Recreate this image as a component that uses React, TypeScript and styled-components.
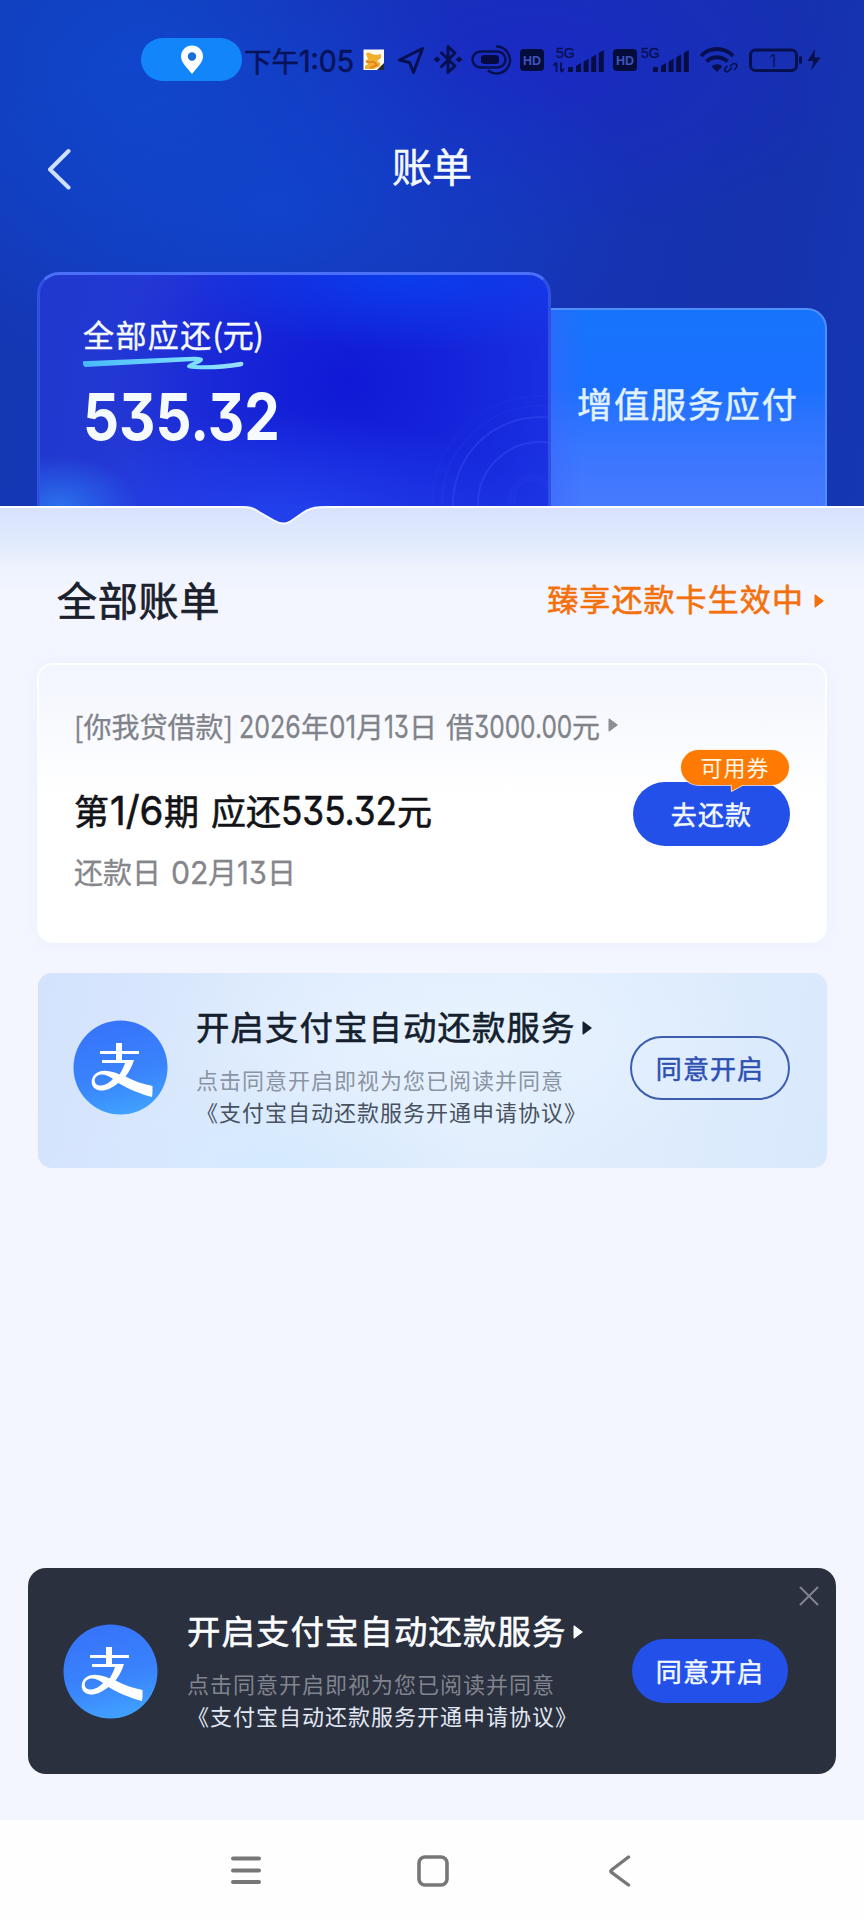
import React, { useLayoutEffect, useRef, useState } from 'react';
import styled, { createGlobalStyle } from 'styled-components';

const GlobalStyle = createGlobalStyle`
  * { box-sizing: border-box; }
  body {
    margin: 0;
    background: #f3f6ff;
    font-family: 'Noto Sans CJK SC', 'Noto Sans', sans-serif;
  }
  button { font-family: inherit; padding: 0; cursor: pointer; }
`;

const Screen = styled.div`
  width: 864px;
  height: 1920px;
  display: flex;
  flex-direction: column;
  background: #f3f6ff;
  overflow: hidden;
`;

/* ---------- numerals ---------- */

const NumBox = styled.span<{ $w: number; $size: number; $weight: number; $ml?: number }>`
  display: inline-block;
  flex: none;
  width: ${(p) => p.$w}px;
  margin-left: ${(p) => p.$ml ?? 0}px;
  font-family: Inter, sans-serif;
  font-feature-settings: 'cv09' 1;
  font-size: ${(p) => p.$size}px;
  font-weight: ${(p) => p.$weight};
  line-height: 1;
  letter-spacing: 0;
  white-space: nowrap;
`;

const NumInner = styled.span`
  display: inline-block;
  transform-origin: 0 50%;
`;

/* Condensed numerals: the digits are squeezed to the given advance width. */
function Num(props: { w: number; size: number; weight?: number; ml?: number; children: string }) {
  const ref = useRef<HTMLSpanElement>(null);
  const [scale, setScale] = useState(1);
  useLayoutEffect(() => {
    if (ref.current) setScale(props.w / ref.current.offsetWidth);
  }, [props.w, props.children]);
  return (
    <NumBox $w={props.w} $size={props.size} $weight={props.weight ?? 400} $ml={props.ml}>
      <NumInner ref={ref} style={{ transform: `scaleX(${scale})` }}>
        {props.children}
      </NumInner>
    </NumBox>
  );
}

/* ---------- header ---------- */

const Header = styled.header`
  flex: none;
  height: 506px;
  display: flex;
  flex-direction: column;
  background:
    radial-gradient(ellipse 330px 260px at 130px 60px, rgba(14, 76, 212, 0.7), rgba(14, 76, 212, 0) 100%),
    radial-gradient(ellipse 360px 200px at 280px 210px, rgba(16, 70, 210, 0.7), rgba(16, 70, 210, 0) 100%),
    radial-gradient(ellipse 360px 180px at 530px 60px, rgba(27, 38, 200, 0.7), rgba(27, 38, 200, 0) 100%),
    linear-gradient(100deg, #1438b4 0%, #1634b6 55%, #1632ac 85%, #1537b4 100%);
`;

const StatusBar = styled.div`
  height: 98px;
  padding: 21px 0 0 141px;
  display: flex;
  align-items: center;
  color: #07125a;
`;

const LocationPill = styled.div`
  width: 101px;
  height: 43px;
  border-radius: 22px;
  background: #1285fb;
  display: flex;
  align-items: center;
  justify-content: center;
`;

const Clock = styled.div`
  width: 113px;
  padding-left: 2px;
  display: flex;
  align-items: baseline;
  font-size: 27.5px;
  line-height: 40px;
  -webkit-text-stroke: 0.6px #07125a;
`;

const StatusIcon = styled.svg<{ $gap: number }>`
  flex: none;
  margin-left: ${(p) => p.$gap}px;
  display: block;
`;

const NavBar = styled.div`
  height: 143px;
  display: grid;
  grid-template-columns: 120px 1fr 120px;
  align-items: center;
`;

const BackButton = styled.button`
  border: 0;
  background: none;
  padding: 0 0 2px 46px;
  display: flex;
`;

const PageTitle = styled.h1`
  margin: 0 0 9px;
  text-align: center;
  font-size: 40px;
  font-weight: 400;
  line-height: 56px;
  color: #f4f8ff;
  -webkit-text-stroke: 0.5px #f4f8ff;
`;

const Tabs = styled.div`
  flex: 1;
  padding: 31px 37px 0;
  display: flex;
  align-items: flex-end;
`;

const ActiveTab = styled.div`
  width: 514px;
  height: 234px;
  position: relative;
  border-radius: 22px 22px 0 0;
  border: 3px solid #3050e4;
  border-top-color: #4a70fa;
  border-bottom: 0;
  padding: 37px 0 0 43px;
  background:
    radial-gradient(ellipse 80px 50px at 22px 234px, rgba(44, 122, 242, 0.85), rgba(44, 110, 242, 0) 100%),
    radial-gradient(ellipse 230px 80px at 370px 0, rgba(8, 66, 240, 0.85), rgba(8, 66, 240, 0) 100%),
    radial-gradient(ellipse 240px 110px at 250px 250px, rgba(36, 68, 240, 0.9), rgba(36, 68, 240, 0) 100%),
    radial-gradient(ellipse 240px 200px at 310px 110px, rgba(16, 26, 214, 1), rgba(16, 26, 214, 0) 100%),
    linear-gradient(100deg, #2038cc 0%, #2438d6 25%, #1a2cdc 60%, #1b34e4 100%);
  background-origin: border-box;
  color: #f5faff;
`;

const Ripples = styled.svg`
  position: absolute;
  right: 0;
  bottom: 0;
`;

const TabLabel = styled.div`
  font-size: 31px;
  line-height: 44px;
  letter-spacing: 1.4px;
  white-space: nowrap;
  -webkit-text-stroke: 0.4px #f5faff;
`;

const Parens = styled.span`
  letter-spacing: -0.4px;
`;

const Squiggle = styled.svg`
  display: block;
  margin-top: 0;
`;

const Amount = styled.div`
  margin-top: 14px;
  padding-left: 0;
`;

const SideTab = styled.div`
  width: 276px;
  height: 198px;
  border-radius: 0 20px 0 0;
  border: 2px solid #5090fd;
  border-left: 0;
  border-bottom: 0;
  padding: 68px 0 0 26px;
  background:
    linear-gradient(90deg, rgba(60, 100, 250, 0.45), rgba(60, 100, 250, 0) 12%),
    linear-gradient(180deg, #1674fc 0%, #1b70fe 40%, #3876fe 70%, #477afe 100%);
  background-origin: border-box;
  font-size: 35.4px;
  line-height: 50px;
  letter-spacing: 1.5px;
  color: #e1f2ff;
  -webkit-text-stroke: 0.5px #e1f2ff;
  white-space: nowrap;
`;

/* ---------- bills ---------- */

const Bills = styled.main`
  position: relative;
  flex: 1;
  padding: 0 37px;
  border-top: 2px solid #fbfdff;
  background: linear-gradient(180deg, #d9e2fd 0, #e1ebfd 36px, #edf2fd 58px, #f3f6ff 85px);
`;

const Notch = styled.svg`
  position: absolute;
  left: 240px;
  top: -3px;
`;

const BillsHead = styled.div`
  height: 155px;
  padding: 35px 3px 0 20px;
  display: flex;
  align-items: center;
  justify-content: space-between;
`;

const SectionTitle = styled.h2`
  margin: -8px 0 0;
  font-size: 40px;
  line-height: 56px;
  font-weight: 400;
  letter-spacing: 0.8px;
  color: #1a202c;
  -webkit-text-stroke: 0.7px #1a202c;
`;

const CardStatus = styled.div`
  margin-top: -10px;
  display: flex;
  align-items: center;
  gap: 10px;
  font-size: 31px;
  line-height: 44px;
  letter-spacing: 1.1px;
  color: #f4700c;
  -webkit-text-stroke: 0.6px #f4700c;
  > svg { margin-top: 5px; }
`;

const BillCard = styled.section`
  height: 280px;
  padding: 40px 36px 0 35px;
  border: 2px solid #fdfeff;
  border-radius: 16px;
  background: linear-gradient(180deg, #f3f6ff 0, #f6f8fe 40px, #fff 130px);
  box-shadow: 0 0 14px rgba(220, 228, 246, 0.35);
`;

const Loan = styled.div`
  display: flex;
  align-items: baseline;
  font-size: 28px;
  line-height: 42px;
  color: #808389;
  -webkit-text-stroke: 0.3px #808389;
  white-space: nowrap;
  > svg { align-self: center; margin-top: -2px; }
`;

const Due = styled.div`
  display: flex;
  align-items: flex-start;
  justify-content: space-between;
`;

const Installment = styled.div`
  margin-top: 38px;
  display: flex;
  align-items: baseline;
  font-size: 35px;
  line-height: 50px;
  color: #121317;
  -webkit-text-stroke: 0.6px #121317;
  white-space: nowrap;
`;

const DueDate = styled.div`
  margin-top: 15px;
  display: flex;
  align-items: baseline;
  font-size: 29px;
  line-height: 42px;
  color: #85868a;
  -webkit-text-stroke: 0.3px #85868a;
  white-space: nowrap;
`;

const Gap = styled.span<{ $w: number }>`
  flex: none;
  width: ${(p) => p.$w}px;
`;

const PillButton = styled.button<{ $outline?: boolean; $w: number }>`
  flex: none;
  width: ${(p) => p.$w}px;
  height: 64px;
  border-radius: 32px;
  border: ${(p) => (p.$outline ? '2px solid #3c5cae' : '0')};
  background: ${(p) => (p.$outline ? 'transparent' : '#2250e8')};
  color: ${(p) => (p.$outline ? '#2d50b2' : '#f2f8ff')};
  font-size: 26px;
  letter-spacing: 1.1px;
  line-height: 38px;
  padding-bottom: 1px;
  -webkit-text-stroke: 0.5px currentColor;
`;

const PayAction = styled.div`
  position: relative;
  margin: 35px -1px 0 0;
`;

const Coupon = styled.div`
  position: absolute;
  right: 1px;
  top: -32px;
  width: 108px;
  height: 35px;
  border-radius: 18px;
  background: #fe7a02;
  box-shadow: 0 0 0 1px rgba(255, 236, 214, 0.75);
  color: #fff8ea;
  font-size: 22px;
  letter-spacing: 1px;
  line-height: 33px;
  text-align: center;
`;

const CouponTail = styled.svg`
  position: absolute;
  left: 48px;
  top: 33px;
`;

/* ---------- auto repayment ---------- */

const Promo = styled.section<{ $dark?: boolean }>`
  position: relative;
  display: flex;
  align-items: flex-start;
  height: ${(p) => (p.$dark ? 206 : 195)}px;
  margin: ${(p) => (p.$dark ? '400px -9px 0' : '30px 0 0 1px')};
  padding: ${(p) => (p.$dark ? '56px 48px 0 35px' : '47px 37px 0 35px')};
  border-radius: ${(p) => (p.$dark ? 18 : 14)}px;
  background: ${(p) =>
    p.$dark
      ? '#2a303d'
      : `radial-gradient(ellipse 200px 90px at 230px 195px, rgba(212, 234, 254, .9), rgba(212, 234, 254, 0)),
         radial-gradient(ellipse 300px 140px at 420px 60px, rgba(232, 243, 255, .9), rgba(232, 243, 255, 0)),
         linear-gradient(100deg, #d3e3fd 0%, #deebfd 35%, #e2eefd 60%, #d9e9fc 100%)`};
`;

const PromoText = styled.div<{ $dark?: boolean }>`
  flex: 1;
  margin: ${(p) => (p.$dark ? '-18px 0 0 29px' : '-18px 0 0 28px')};
  white-space: nowrap;
`;

const PromoTitle = styled.h3<{ $dark?: boolean }>`
  margin: 0;
  display: flex;
  align-items: center;
  gap: 7px;
  font-size: 33.4px;
  font-weight: 400;
  line-height: 48px;
  letter-spacing: 1.1px;
  color: ${(p) => (p.$dark ? '#fafcff' : '#151f2d')};
  -webkit-text-stroke: 0.6px currentColor;
  > svg { margin-top: 3px; }
`;

const PromoNote = styled.p<{ $dark?: boolean }>`
  margin: 13px 0 0;
  font-size: 22px;
  line-height: 32px;
  letter-spacing: 1px;
  color: ${(p) => (p.$dark ? '#80848e' : '#8b94a2')};
`;

const Agreement = styled.a<{ $dark?: boolean }>`
  display: block;
  font-size: 22px;
  line-height: 32px;
  letter-spacing: 1px;
  color: ${(p) => (p.$dark ? '#e2e8f4' : '#48525f')};
`;

const PromoAction = styled.div<{ $dark?: boolean }>`
  margin-top: ${(p) => (p.$dark ? 15 : 16)}px;
`;

const CloseButton = styled.button`
  position: absolute;
  right: 17px;
  top: 18px;
  border: 0;
  background: none;
  display: flex;
`;

const SystemNav = styled.nav`
  flex: none;
  height: 100px;
  padding: 1px 0 0 1px;
  background: #fefefe;
  display: flex;
  justify-content: center;
  align-items: center;
  gap: 155px;
`;

function Arrow({ w = 10, h = 14, color }: { w?: number; h?: number; color: string }) {
  return (
    <svg width={w} height={h} viewBox="0 0 10 14" preserveAspectRatio="none">
      <path d="M1 0.8 9.4 7 1 13.2Z" fill={color} stroke={color} strokeWidth="1" strokeLinejoin="round" />
    </svg>
  );
}

function AlipayLogo({ id }: { id: string }) {
  return (
    <svg width="95" height="95" viewBox="0 0 95 95">
      <defs>
        <linearGradient id={id} x1="0.35" y1="0" x2="0.6" y2="1">
          <stop offset="0" stopColor="#3673fb" />
          <stop offset="0.6" stopColor="#3a84fc" />
          <stop offset="1" stopColor="#40a2fe" />
        </linearGradient>
      </defs>
      <circle cx="47.5" cy="47.5" r="47" fill={`url(#${id})`} />
      <g fill="#fff">
        <rect x="43" y="23" width="6" height="20" />
        <rect x="27" y="31" width="39" height="3" />
        <rect x="29" y="40" width="28" height="3" />
        <path d="M53 40h8c-2 6.500-5 12-8.500 16.500 8 4.500 17 7.500 27 9.500v5c0 3-.3 5-.5 6-13-3.500-23.500-8-33.500-14-7 5.500-13 8-18.500 7.500-5.500-.7-8.500-4.500-8.300-9 .3-6.500 6-11 13.300-10.800 5.500.2 10.500 1.700 14.500 3.700C49.500 50 51.500 45 53 40ZM40 59c-4-2.800-7.500-4.500-11-4.500-4.200 0-7.200 2.500-7.300 5.800 0 3.700 3 5.700 7 5.200 3.800-.5 7.800-3 11.300-6.500Z" />
      </g>
    </svg>
  );
}

function AutoRepay({ dark }: { dark?: boolean }) {
  return (
    <Promo $dark={dark}>
      <AlipayLogo id={dark ? 'alipay-dark' : 'alipay-light'} />
      <PromoText $dark={dark}>
        <PromoTitle $dark={dark}>
          开启支付宝自动还款服务
          <Arrow color={dark ? '#fafcff' : '#151f2d'} />
        </PromoTitle>
        <PromoNote $dark={dark}>点击同意开启即视为您已阅读并同意</PromoNote>
        <Agreement $dark={dark}>《支付宝自动还款服务开通申请协议》</Agreement>
      </PromoText>
      <PromoAction $dark={dark}>
        <PillButton $w={dark ? 156 : 160} $outline={!dark}>同意开启</PillButton>
      </PromoAction>
      {dark && (
        <CloseButton aria-label="关闭">
          <svg width="20" height="20" viewBox="0 0 20 20">
            <path d="M1.500 1.500 18.500 18.500M18.500 1.500 1.500 18.500" stroke="#7f8490" strokeWidth="2" strokeLinecap="round" />
          </svg>
        </CloseButton>
      )}
    </Promo>
  );
}

/* Status icons share one 44px-high strip; x is the left edge of each in strip units. */
function Glyph({ x, w, gap, children }: { x: number; w: number; gap: number; children: React.ReactNode }) {
  return (
    <StatusIcon $gap={gap} width={w} height={44} viewBox={`${x} 38 ${w} 44`} fill="none" stroke="#07104f">
      {children}
    </StatusIcon>
  );
}

function HdBadge({ x }: { x: number }) {
  return (
    <>
      <rect x={x} y="49" width="24" height="22" rx="4" fill="#040c3c" stroke="none" />
      <text x={x + 12} y="64.500" textAnchor="middle" fontFamily="Liberation Sans" fontSize="12.500" fontWeight="700" fill="#4054bc" stroke="none">HD</text>
    </>
  );
}

function Signal({ x }: { x: number }) {
  return (
    <g fill="#050d42" stroke="none">
      <rect x={x - 7} y="67" width="5" height="5" rx="1" />
      {[0, 1, 2, 3].map((i) => (
        <path key={i} d={`M${x + 1 + i * 7.6} 72v-${6 + i * 4.3}l5-3v${9 + i * 4.3}z`} />
      ))}
    </g>
  );
}

function StatusStrip() {
  return (
    <StatusBar>
      <LocationPill>
        <svg width="24" height="30" viewBox="0 0 24 30">
          <path d="M12 29C7 22.500 1 17.500 1 11.500a11 11 0 0 1 22 0C23 17.500 17 22.500 12 29Z" fill="#fff" />
          <circle cx="12" cy="11.500" r="4.200" fill="#1a6fd6" />
        </svg>
      </LocationPill>
      <Clock>
        下午
        <Num w={55} size={30}>1:05</Num>
      </Clock>
      <Glyph x={363} w={22} gap={8}>
        <rect x="363.500" y="49.500" width="20.500" height="20.500" fill="#fffaf0" stroke="none" />
        <path d="M366 54c2-3 4-1 6 0l4 1 5-1v4l-4 3 3 2v3l-6 3h-9v-3l3-2-3-3 3-2Z" fill="#f0b02c" stroke="none" />
        <path d="M366 62h8l3 3-7 3" stroke="#e07a20" strokeWidth="1.500" />
        <path d="M384 63v7h-7Z" fill="#222a30" stroke="none" />
      </Glyph>
      <Glyph x={396} w={30} gap={11}>
        <path d="M422.500 48.500 399.500 60 409.500 62.500 413.500 72.500Z" strokeWidth="3" strokeLinejoin="round" />
      </Glyph>
      <Glyph x={433} w={30} gap={7}>
        <path d="M440.500 52 455 66 448 72.500V46.500L455 53 440.500 67.500" strokeWidth="3" strokeLinejoin="round" />
        <path d="M433.500 59.500l3.500-3 3.500 3-3.500 3ZM455.500 59.500l3.500-3 3.500 3-3.500 3Z" fill="#07104f" stroke="none" />
      </Glyph>
      <Glyph x={470} w={42} gap={7}>
        <rect x="472.500" y="51.500" width="33" height="16" rx="8" strokeWidth="2.500" />
        <rect x="481" y="55" width="18" height="9" rx="3" fill="#050b40" stroke="none" />
        <path d="M496 46.500a13.500 13.500 0 1 1-8 24" strokeWidth="2.500" />
      </Glyph>
      <Glyph x={520} w={24} gap={8}><HdBadge x={520} /></Glyph>
      <Glyph x={552} w={54} gap={8}>
        <text x="556" y="58" fontFamily="Liberation Sans" fontSize="14" fill="#07104f" strokeWidth="0.300">5G</text>
        <path d="M556.500 72v-9M553.500 65.500l3-3M561 62.500v9M564 69l-3 3" strokeWidth="1.800" />
        <Signal x={575} />
      </Glyph>
      <Glyph x={613} w={24} gap={7}><HdBadge x={613} /></Glyph>
      <Glyph x={640} w={51} gap={3}>
        <text x="641" y="58" fontFamily="Liberation Sans" fontSize="14" fill="#07104f" strokeWidth="0.300">5G</text>
        <Signal x={660} />
      </Glyph>
      <Glyph x={698} w={42} gap={7}>
        <path d="M701 56a22 22 0 0 1 32 0M706.500 61.500a15 15 0 0 1 21 0" strokeWidth="4" />
        <path d="M711.500 66.500a8 8 0 0 1 11 0L717 72Z" fill="#07104f" stroke="none" />
        <path d="M730 66.500l2-2c3-2.500 6.500.5 4 3.500l-2 2M732 67.500l-3.500 3.500c-2.500 2-5-.5-3-3l2-2" strokeWidth="1.600" />
      </Glyph>
      <Glyph x={748} w={55} gap={8}>
        <rect x="750.500" y="50" width="46" height="20.500" rx="5" strokeWidth="3" />
        <rect x="799" y="56" width="3" height="8" rx="1.500" fill="#07104f" stroke="none" />
        <text x="773" y="66.500" textAnchor="middle" fontFamily="Inter" fontSize="17" fill="#0a155c" stroke="none">1</text>
      </Glyph>
      <Glyph x={805} w={18} gap={2}>
        <path d="M815 49l-7.500 12h6l-2.500 9.500 9.500-13h-6Z" fill="#07104a" stroke="none" />
      </Glyph>
    </StatusBar>
  );
}

export default function App() {
  return (
    <>
      <GlobalStyle />
      <Screen>
        <Header>
          <StatusStrip />
          <NavBar>
            <BackButton aria-label="返回">
              <svg width="26" height="42" viewBox="0 0 26 42" fill="none" stroke="#cfe0fd" strokeWidth="4" strokeLinecap="round" strokeLinejoin="round">
                <path d="M22.500 3 4 21.500 22.500 39.500" />
              </svg>
            </BackButton>
            <PageTitle>账单</PageTitle>
          </NavBar>
          <Tabs>
            <ActiveTab>
              <Ripples width="150" height="130" viewBox="0 0 150 130" fill="none" stroke="#3c4cf4" strokeWidth="2">
                <circle cx="142" cy="128" r="87" opacity="0.450" />
                <circle cx="142" cy="128" r="62" opacity="0.450" />
                <circle cx="142" cy="128" r="98" opacity="0.150" />
                <circle cx="142" cy="128" r="108" opacity="0.100" />
                <circle cx="134" cy="122" r="20" opacity="0.120" strokeWidth="8" />
              </Ripples>
              <TabLabel>全部应还<Parens>(元)</Parens></TabLabel>
              <Squiggle width="166" height="14" viewBox="0 0 166 14" fill="none">
                <defs>
                  <linearGradient id="squiggle" gradientUnits="userSpaceOnUse" x1="0" y1="0" x2="166" y2="0">
                    <stop offset="0" stopColor="#47b8fc" />
                    <stop offset="0.700" stopColor="#7fe0ff" />
                    <stop offset="1" stopColor="#a0dcff" />
                  </linearGradient>
                </defs>
                <path d="M0 5.200 110 .8q11-.4 10 3.200-1 3-8 5 22 1 46-3.200 2.500 0 2.500 2 0 2-2.500 2.600-25 3.800-46 2.600-9-.5-8-3 .5-2 8-5L2 11Q-1 9 0 5.200Z" fill="url(#squiggle)" />
              </Squiggle>
              <Amount><Num w={197} size={65} weight={700}>535.32</Num></Amount>
            </ActiveTab>
            <SideTab>增值服务应付</SideTab>
          </Tabs>
        </Header>

        <Bills>
          <Notch width="90" height="22" viewBox="0 0 90 22">
            <path d="M0 0v1.500C10 1.500 13 2.500 20 7.500L34 15.500Q45 22 54 14L64 7C72 2 76 1.500 90 1.500V0Z" fill="#2140ec" />
            <path d="M0 2C10 2 13 3 20 7.500L34 15.500Q45 22 54 14L64 7C72 2.500 76 2 90 2" fill="none" stroke="#f4f9ff" strokeWidth="2" />
          </Notch>
          <BillsHead>
            <SectionTitle>全部账单</SectionTitle>
            <CardStatus>
              臻享还款卡生效中
              <Arrow color="#f4700c" />
            </CardStatus>
          </BillsHead>

          <BillCard>
            <Loan>
              [你我贷借款]
              <Num w={62} size={31} ml={6}>2026</Num>年
              <Num w={27} size={31}>01</Num>月
              <Num w={25} size={31}>13</Num>日
              <Gap $w={9} />借
              <Num w={98} size={31}>3000.00</Num>元
              <Gap $w={8} />
              <Arrow color="#8b8e95" />
            </Loan>
            <Due>
              <div>
                <Installment>
                  第<Num w={54} size={40} ml={1}>1/6</Num>期<Gap $w={12} />应还
                  <Num w={116} size={40}>535.32</Num>元
                </Installment>
                <DueDate>
                  还款日<Num w={37} size={31} ml={10}>02</Num>月<Num w={30} size={31}>13</Num>日
                </DueDate>
              </div>
              <PayAction>
                <PillButton $w={157}>去还款</PillButton>
                <Coupon>
                  可用券
                  <CouponTail width="18" height="10" viewBox="0 0 18 10">
                    <path d="M2 0 2.500 8.500 15 1.500V0Z" fill="#fe7a02" />
                    <path d="M2 1.500 2.500 8.500 14.500 2" fill="none" stroke="#ffd9b8" strokeWidth="1" />
                  </CouponTail>
                </Coupon>
              </PayAction>
            </Due>
          </BillCard>

          <AutoRepay />
          <AutoRepay dark />
        </Bills>

        <SystemNav>
          <svg width="32" height="32" viewBox="0 0 32 32" stroke="#777" strokeWidth="4" strokeLinecap="round">
            <path d="M3 3.500H29M3 15.500H29M3 27H29" />
          </svg>
          <svg width="32" height="32" viewBox="0 0 32 32" fill="none" stroke="#777" strokeWidth="3.600">
            <rect x="2" y="2" width="28" height="28" rx="6" />
          </svg>
          <svg width="32" height="32" viewBox="0 0 32 32" fill="none" stroke="#777" strokeWidth="3.400" strokeLinecap="round" strokeLinejoin="round">
            <path d="M24.500 2 7.500 15q-1.500 1.200 0 2.400L24.500 30" />
          </svg>
        </SystemNav>
      </Screen>
    </>
  );
}
